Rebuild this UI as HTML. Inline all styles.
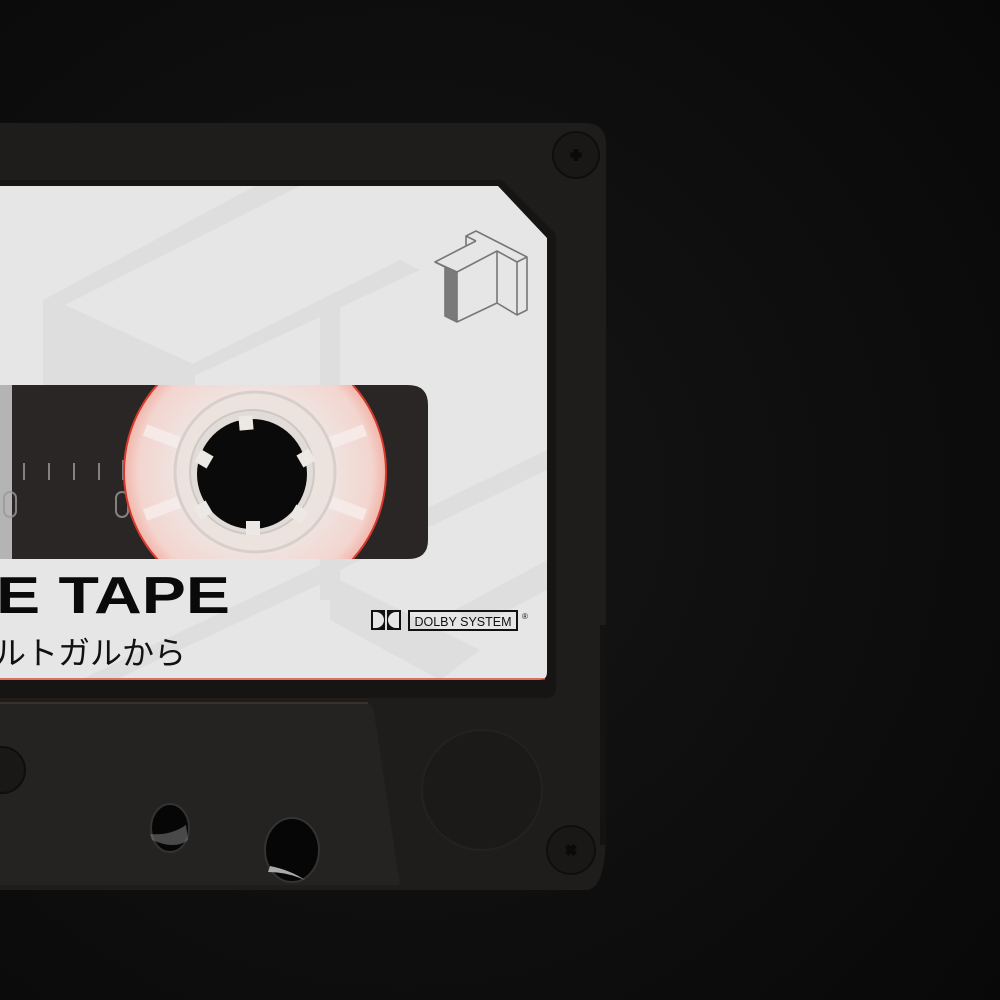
<!DOCTYPE html>
<html><head><meta charset="utf-8"><style>
html,body{margin:0;padding:0;background:#0c0c0c;width:1000px;height:1000px;overflow:hidden}
svg{display:block}
</style></head><body>
<svg width="1000" height="1000" viewBox="0 0 1000 1000" xmlns="http://www.w3.org/2000/svg">
<defs>
<radialGradient id="bg" cx="0.4" cy="0.5" r="0.8"><stop offset="0" stop-color="#161616"/><stop offset="1" stop-color="#080808"/></radialGradient>
<radialGradient id="reel" cx="0.5" cy="0.5" r="0.5"><stop offset="0.55" stop-color="#efe6e3"/><stop offset="0.9" stop-color="#f3d5cf"/><stop offset="1" stop-color="#f2b8ad"/></radialGradient>
<clipPath id="win"><path d="M0 385 H408 Q428 385 428 405 V540 Q428 559 408 559 H0 Z"/></clipPath>
</defs>
<rect width="1000" height="1000" fill="url(#bg)"/>
<!-- body -->
<path d="M0 123 H585 Q606 123 606 145 V830 Q606 890 586 890 H0 Z" fill="#1f1d1c"/>
<path d="M0 180 H502 L556 234 V688 Q556 698 546 698 H0 Z" fill="#161514"/>
<!-- label -->
<path d="M0 186 H498 L547 238 V672 Q547 680 539 680 H0 Z" fill="#e6e6e6"/>
<g fill="#dedede">
<polygon points="43,300 255,186 300,186 65,305"/>
<polygon points="43,300 65,305 195,365 195,385 43,385"/>
<polygon points="320,300 340,290 340,600 320,600"/>
<polygon points="150,385 400,260 420,270 175,385"/>
<polygon points="320,560 547,450 547,470 340,570"/>
<polygon points="80,680 320,565 340,575 115,680"/>
<polygon points="330,575 480,650 440,680 330,620"/>
<polygon points="455,610 547,560 547,590 480,625"/>
</g>
<line x1="0" y1="679" x2="545" y2="679" stroke="#d9483a" stroke-width="1.5"/>
<!-- window -->
<path d="M0 385 H408 Q428 385 428 405 V540 Q428 559 408 559 H0 Z" fill="#2a2625"/>
<g clip-path="url(#win)">
<rect x="0" y="385" width="12" height="174" fill="#d8d8d8" opacity="0.8"/>
<g stroke="#9a9a9a" stroke-width="2" fill="none" opacity="0.8">
<line x1="24" y1="463" x2="24" y2="480"/><line x1="49" y1="463" x2="49" y2="480"/><line x1="74" y1="463" x2="74" y2="480"/><line x1="99" y1="463" x2="99" y2="480"/><line x1="123" y1="460" x2="123" y2="480"/>
<rect x="116" y="492" width="12" height="25" rx="6"/><rect x="4" y="492" width="12" height="25" rx="6"/>
</g>
<circle cx="255" cy="472" r="132" fill="#d63a2c"/>
<circle cx="255" cy="472" r="130" fill="url(#reel)"/>
<g stroke="#f7eeec" stroke-width="12" opacity="0.8">
<line x1="145" y1="430" x2="185" y2="445"/><line x1="145" y1="515" x2="185" y2="500"/><line x1="365" y1="430" x2="325" y2="445"/><line x1="365" y1="515" x2="325" y2="500"/>
</g>
<circle cx="255" cy="472" r="80" fill="#ece3df" stroke="#d8cfcb" stroke-width="3"/>
<circle cx="252" cy="472" r="62" fill="#e2dcd9" stroke="#cfc8c4" stroke-width="2"/>
<circle cx="252" cy="474" r="55" fill="#0a0a0a"/>
<g fill="#ece8e4">
<rect x="239" y="416" width="14" height="14" transform="rotate(-5 246 423)"/>
<rect x="299" y="451" width="14" height="14" transform="rotate(60 306 458)"/>
<rect x="292" y="507" width="14" height="14" transform="rotate(-60 299 514)"/>
<rect x="246" y="521" width="14" height="14"/>
<rect x="196" y="503" width="14" height="14" transform="rotate(60 203 510)"/>
<rect x="197" y="452" width="14" height="14" transform="rotate(-60 204 459)"/>
</g>
</g>
<!-- text -->
<text x="-4" y="613" font-family="Liberation Sans, sans-serif" font-weight="bold" font-size="52" fill="#0a0a0a" textLength="234" lengthAdjust="spacingAndGlyphs">E TAPE</text>
<text x="-6" y="664" font-family="Liberation Sans, 'Noto Sans CJK JP', sans-serif" font-size="32" fill="#111">ルトガルから</text>
<!-- dolby -->
<g>
<rect x="371" y="610" width="14" height="20" fill="#111"/><rect x="387" y="610" width="14" height="20" fill="#111"/>
<path d="M373 612 h3 a8 8 0 0 1 0 16 h-3z" fill="#e6e6e6"/>
<path d="M399 612 h-3 a8 8 0 0 0 0 16 h3z" fill="#e6e6e6"/>
<rect x="409" y="611" width="108" height="19" fill="none" stroke="#111" stroke-width="2"/>
<text x="463" y="626" text-anchor="middle" font-family="Liberation Sans, sans-serif" font-size="12.5" fill="#111">DOLBY SYSTEM</text>
<text x="522" y="619" font-family="Liberation Sans, sans-serif" font-size="8" fill="#111">®</text>
</g>
<!-- logo -->
<path d="M435 262 L445 267 L445 316 L457 322 L457 272 Z" fill="#7a7a7a"/>
<g fill="none" stroke="#777" stroke-width="1.6" stroke-linejoin="round">
<path d="M435 262 L466 246 L466 236 L476 231 L527 257 L527 310 L517 315 L497 303 L457 322 L445 316 L445 267 L435 262 Z"/>
<path d="M435 262 L457 272 L497 251 L517 262 L527 257"/>
<path d="M457 272 V322 M497 251 V303 M517 262 V315"/>
<path d="M466 236 L476 241 L476 241 M466 246 L476 241"/>
</g>
<!-- bottom trapezoid -->
<path d="M0 703 H365 Q372 703 374 712 L400 885 H0 Z" fill="#252322"/>
<line x1="0" y1="703" x2="368" y2="703" stroke="#3a302c" stroke-width="2"/>
<ellipse cx="170" cy="828" rx="19" ry="24" fill="#060606" stroke="#333" stroke-width="2"/>
<path d="M150 834 Q170 836 186 825 L188 840 Q175 850 152 840 Z" fill="#777" opacity="0.6"/>
<ellipse cx="292" cy="850" rx="27" ry="32" fill="#060606" stroke="#333" stroke-width="2"/>
<path d="M270 866 Q290 870 305 880 L300 878 Q285 872 268 872 Z" fill="#aaa"/>
<circle cx="482" cy="790" r="60" fill="#1c1a19" stroke="#222" stroke-width="2"/>
<!-- screws -->
<g>
<circle cx="576" cy="155" r="23" fill="#1a1817" stroke="#0e0e0e" stroke-width="2"/>
<path d="M570 155 h12 M576 149 v12" stroke="#0a0a0a" stroke-width="5"/>
<circle cx="571" cy="850" r="24" fill="#1a1817" stroke="#0e0e0e" stroke-width="2"/>
<path d="M565 850 h12 M571 844 v12" stroke="#0a0a0a" stroke-width="5" transform="rotate(45 571 850)"/>
<circle cx="2" cy="770" r="23" fill="#1a1817" stroke="#0e0e0e" stroke-width="2"/>
</g>
<rect x="600" y="625" width="6" height="220" fill="#141312"/>
</svg>
</body></html>
